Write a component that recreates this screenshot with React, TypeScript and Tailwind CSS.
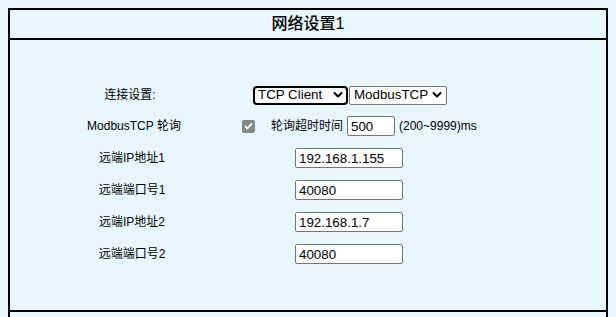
import React from 'react'

const FONT = "font-['Liberation_Sans','Noto_Sans_CJK_SC',sans-serif]"

function Chevron() {
  return (
    <svg width="10" height="7" viewBox="0 0 10 7" className="pointer-events-none absolute right-[5px] top-1/2 -translate-y-1/2">
      <path d="M1.5 1.5 L5 5 L8.5 1.5" fill="none" stroke="#000" strokeWidth="2" strokeLinecap="round" strokeLinejoin="round" />
    </svg>
  )
}

function Select({ value, width, focused }: { value: string; width: string; focused?: boolean }) {
  return (
    <div className={`relative ${width} h-[19px]`}>
      <select
        defaultValue={value}
        className={
          focused
            ? 'h-full w-full appearance-none rounded-[4px] border-2 border-black bg-white pl-[3px] text-[13.33px] leading-none text-black outline-none'
            : 'h-full w-full appearance-none rounded-[2px] border border-[#767676] bg-white pl-[4px] text-[13.33px] leading-none text-black outline-none'
        }
      >
        <option>{value}</option>
      </select>
      <Chevron />
    </div>
  )
}

function TextInput({ value, width }: { value: string; width: string }) {
  return (
    <input
      defaultValue={value}
      className={`${width} h-[20px] rounded-[2px] border border-[#767676] bg-white px-[3px] text-[13.33px] text-black outline-none`}
    />
  )
}

const remote = [
  { label: '远端IP地址1', value: '192.168.1.155' },
  { label: '远端端口号1', value: '40080' },
  { label: '远端IP地址2', value: '192.168.1.7' },
  { label: '远端端口号2', value: '40080' },
]

export default function App() {
  return (
    <div className={`min-h-screen bg-[#e8f7ff] p-2 text-[12px] text-black ${FONT}`}>
      <div className="border-x-2 border-t-2 border-black">
        {/* Header */}
        <div className="flex h-[30px] items-center justify-center border-b-2 border-black">
          <h1 className="text-[16px] font-medium">网络设置1</h1>
        </div>

        {/* Settings */}
        <div className="h-[272px] border-b-2 border-black pt-[38px]">
          <div className="flex h-8 items-center pt-[2px]">
            <div className="w-[243px] shrink-0 pr-[3px] text-center">连接设置:</div>
            <Select value="TCP Client" width="w-[95px]" focused />
            <div className="ml-[1px]">
              <Select value="ModbusTCP" width="w-[98px]" />
            </div>
          </div>

          <div className="flex h-8 items-center">
            <div className="w-[232px] shrink-0 pl-4 text-center">ModbusTCP 轮询</div>
            <span className="flex h-[13px] w-[13px] items-center justify-center rounded-[2px] bg-[#878787]">
              <svg width="9" height="8" viewBox="0 0 9 8">
                <path d="M1 4.2 L3.4 6.5 L8 1.3" fill="none" stroke="#fff" strokeWidth="1.8" />
              </svg>
            </span>
            <span className="ml-4">轮询超时时间</span>
            <div className="ml-1">
              <TextInput value="500" width="w-[48px]" />
            </div>
            <span className="ml-1">(200~9999)ms</span>
          </div>

          {remote.map(r => (
            <div key={r.label} className="flex h-8 items-center">
              <div className="w-[285px] shrink-0 pr-[41px] text-center">{r.label}</div>
              <TextInput value={r.value} width="w-[108px]" />
            </div>
          ))}
        </div>

        <div className="h-10" />
      </div>
    </div>
  )
}
